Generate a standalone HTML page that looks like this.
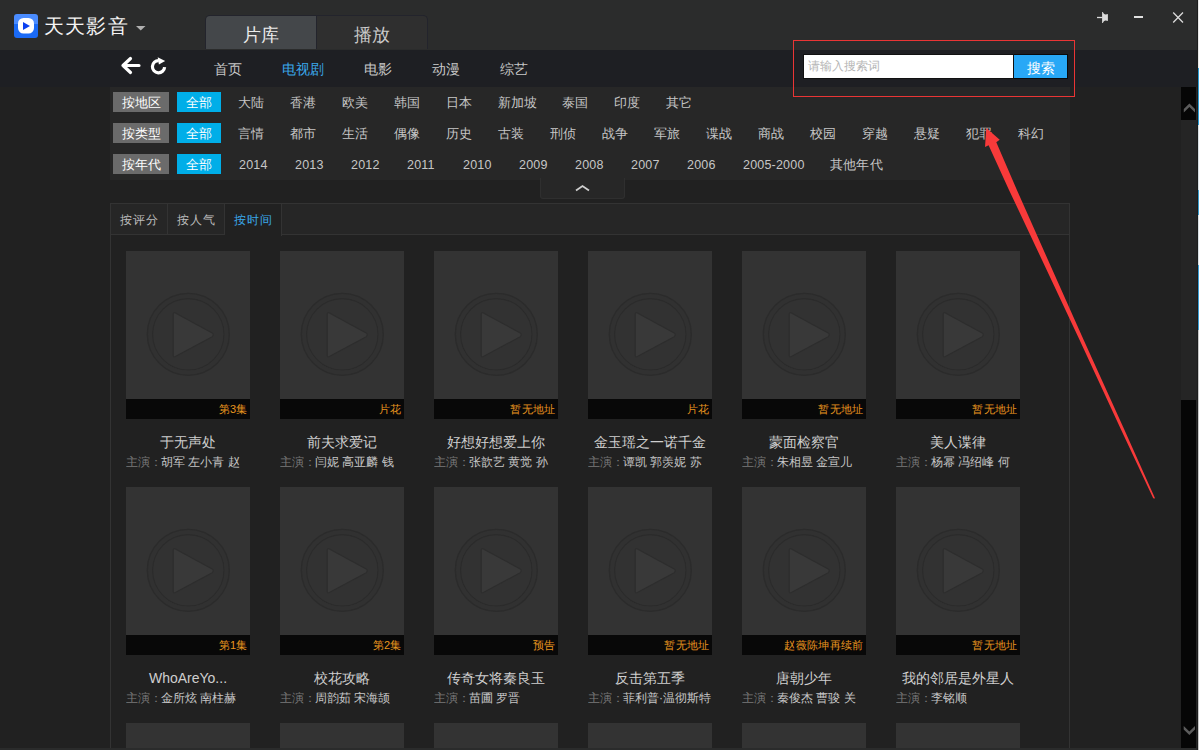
<!DOCTYPE html>
<html><head><meta charset="utf-8"><style>
*{margin:0;padding:0;box-sizing:border-box}
html,body{width:1199px;height:750px;overflow:hidden;background:#212121;font-family:"Liberation Sans",sans-serif;position:relative}
.abs{position:absolute}
#title{left:0;top:0;width:1197px;height:50px;background:#2b2c2c}
#nav{left:0;top:50px;width:1197px;height:37px;background:#1e1f23}
#logo{left:14px;top:14px;width:24px;height:24px;border-radius:3px;background:linear-gradient(#4a8cff 0,#4a8cff 10px,#1a6af5 10px,#1a6af5 100%)}
#apptitle{left:44px;top:13px;font-size:19.5px;color:#f4f4f4;letter-spacing:1.2px;white-space:nowrap}
#tabs{left:205px;top:15px;width:223px;height:34px;border:1px solid #23242c;border-bottom:none;border-radius:5px 5px 0 0;background:#23242c;overflow:hidden}
#tab1{left:0;top:0;width:110px;height:33px;background:#44474a;color:#ececec;font-size:17.5px;text-align:center;line-height:38px}
#tab2{left:111px;top:0;width:110px;height:33px;background:#2f2f2f;color:#cacaca;font-size:17.5px;text-align:center;line-height:38px}
.nv{position:absolute;top:61px;font-size:14px;color:#c8c8c8;white-space:nowrap}
#search-wrap{left:793px;top:40px;width:282px;height:57px;border:1px solid #ea3535}
#sinput{left:803px;top:54px;width:211px;height:25px;background:#fff;border:1px solid #111;font-size:12px;color:#b5b5b5;padding-left:4px;line-height:23px}
#sbtn{left:1014px;top:54px;width:54px;height:25px;background:#28a8f6;border:1px solid #0a0a0a;border-left:none;color:#fff;font-size:14px;text-align:center;line-height:27px}
#filter{left:110px;top:87px;width:960px;height:93px;background:#272727}
.lab,.all,.opt{position:absolute;height:20px;line-height:22px;white-space:nowrap;font-size:12.5px}
.lab{left:113px;width:56px;background:#6b6b6b;color:#fff;text-align:center}
.all{left:177px;width:44px;background:#00aee8;color:#fff;text-align:center}
.opt{color:#c6c6c6;letter-spacing:0.2px}
#collapse{left:540px;top:178px;width:85px;height:21px;background:#272727;border:1px solid #2f2f2f;border-top:none;border-radius:0 0 3px 3px}
#sortbox{left:110px;top:203px;width:960px;height:560px;border:1px solid #333}
#sorthead{left:111px;top:204px;width:958px;height:31px;background:#262626;border-bottom:1px solid #333}
.st{position:absolute;top:204px;height:31px;font-size:12px;letter-spacing:0.6px;text-indent:0.6px;color:#bdbdbd;text-align:center;line-height:33px;border-right:1px solid #333}
.card{position:absolute;width:124px}
.poster{position:relative;width:124px;height:168px;background:#333}
.pi{position:absolute;left:0;top:0}
.bar{position:absolute;left:0;bottom:0;width:124px;height:20px;background:#080808;color:#e8951f;font-size:11px;letter-spacing:0.35px;text-align:right;padding-right:2.3px;line-height:20px;white-space:nowrap}
.ttl{margin-top:13px;font-size:14px;color:#cfcfcf;text-align:center;white-space:nowrap;height:20px;line-height:21px}
.act{font-size:12px;color:#c6c6c6;white-space:nowrap;overflow:hidden;height:19px;line-height:21px}
.act span{color:#7a7a7a;margin-right:-1px}
#sb-track{left:1181px;top:87px;width:16px;height:663px;background:#252525}
#sb-up{left:1181px;top:87px;width:15px;height:33px;background:#060606}
#sb-thumb{left:1181px;top:400px;width:15px;height:348px;background:#060606}
#edge{left:1197px;top:0;width:1px;height:750px;background:#1c1d1d}
#edge2{left:1198px;top:0;width:1px;height:750px;background:linear-gradient(#e8e8e8 0,#e8e8e8 68px,#2c9fd8 68px,#2c9fd8 125px,#d8e0e4 125px,#d8e0e4 190px,#3a9fd0 190px,#3a9fd0 215px,#d8e0e4 215px,#d8e0e4 265px,#3aa0d8 265px,#3aa0d8 330px,#c8c8c8 330px,#c8c8c8 100%)}
#bottom{left:0;top:748px;width:1197px;height:2px;background:#2a2b2b}
</style></head><body>
<div id="title" class="abs"></div>
<div id="logo" class="abs"><svg width="24" height="24" viewBox="0 0 24 24"><rect x="4" y="4" width="16" height="15.5" rx="5.5" fill="#fff"/><path d="M9 8 L16 12 L9 16 Z" fill="#0b40f0"/></svg></div>
<div id="apptitle" class="abs">天天影音</div>
<svg class="abs" style="left:136px;top:25px" width="10" height="6"><path d="M0 1 H9.5 L4.75 5.5 Z" fill="#b0b0b0"/></svg>
<div id="tabs" class="abs"><div id="tab1" class="abs">片库</div><div id="tab2" class="abs">播放</div></div>
<svg class="abs" style="left:1096px;top:11px" width="14" height="14" viewBox="0 0 14 14"><path d="M1 6.5 H6.5" stroke="#dcdcdc" stroke-width="1.3"/><path d="M6.1 1 L6.8 1.1 Q7.8 3.2 9.2 3.6 L11.1 3.3 L11.9 3 L11.9 10 L11.1 9.7 L9.2 9.4 Q7.8 9.8 6.8 11.9 L6.1 12 Z" fill="#dcdcdc"/></svg>
<div class="abs" style="left:1134px;top:16px;width:9px;height:2px;background:#e0e0e0"></div>
<svg class="abs" style="left:1172px;top:11px" width="13" height="13" viewBox="0 0 13 13"><path d="M1.2 1.5 L11 11.5 M11 1.5 L1.2 11.5" stroke="#dadada" stroke-width="1.3"/></svg>
<div id="nav" class="abs"></div>
<svg class="abs" style="left:118px;top:54px" width="26" height="24" viewBox="0 0 26 24"><path d="M5 11.5 H21 M12.5 4.5 L5 11.5 L12.5 18.5" stroke="#fff" stroke-width="3.2" fill="none" stroke-linecap="round" stroke-linejoin="round"/></svg>
<svg class="abs" style="left:148px;top:55px" width="22" height="22" viewBox="0 0 22 22"><path d="M10.8 5.6 A6.1 6.1 0 1 0 16.6 12.1" stroke="#fff" stroke-width="3.2" fill="none"/><path d="M9.7 2.2 L17.2 5.9 L10.9 9.6 Z" fill="#fff"/></svg>
<div class="nv" style="left:214px">首页</div>
<div class="nv" style="left:282px;color:#3aa7ea">电视剧</div>
<div class="nv" style="left:364px">电影</div>
<div class="nv" style="left:432px">动漫</div>
<div class="nv" style="left:500px">综艺</div>
<div id="sinput" class="abs">请输入搜索词</div>
<div id="sbtn" class="abs">搜索</div>
<div id="filter" class="abs"></div>
<div class="lab" style="top:92px">按地区</div><div class="all" style="top:92px">全部</div><div class="opt" style="left:238px;top:92px">大陆</div><div class="opt" style="left:290px;top:92px">香港</div><div class="opt" style="left:342px;top:92px">欧美</div><div class="opt" style="left:394px;top:92px">韩国</div><div class="opt" style="left:446px;top:92px">日本</div><div class="opt" style="left:498px;top:92px">新加坡</div><div class="opt" style="left:562px;top:92px">泰国</div><div class="opt" style="left:614px;top:92px">印度</div><div class="opt" style="left:666px;top:92px">其它</div><div class="lab" style="top:123px">按类型</div><div class="all" style="top:123px">全部</div><div class="opt" style="left:238px;top:123px">言情</div><div class="opt" style="left:290px;top:123px">都市</div><div class="opt" style="left:342px;top:123px">生活</div><div class="opt" style="left:394px;top:123px">偶像</div><div class="opt" style="left:446px;top:123px">历史</div><div class="opt" style="left:498px;top:123px">古装</div><div class="opt" style="left:550px;top:123px">刑侦</div><div class="opt" style="left:602px;top:123px">战争</div><div class="opt" style="left:654px;top:123px">军旅</div><div class="opt" style="left:706px;top:123px">谍战</div><div class="opt" style="left:758px;top:123px">商战</div><div class="opt" style="left:810px;top:123px">校园</div><div class="opt" style="left:862px;top:123px">穿越</div><div class="opt" style="left:914px;top:123px">悬疑</div><div class="opt" style="left:966px;top:123px">犯罪</div><div class="opt" style="left:1018px;top:123px">科幻</div><div class="lab" style="top:154px">按年代</div><div class="all" style="top:154px">全部</div><div class="opt" style="left:239px;top:154px">2014</div><div class="opt" style="left:295px;top:154px">2013</div><div class="opt" style="left:351px;top:154px">2012</div><div class="opt" style="left:407px;top:154px">2011</div><div class="opt" style="left:463px;top:154px">2010</div><div class="opt" style="left:519px;top:154px">2009</div><div class="opt" style="left:575px;top:154px">2008</div><div class="opt" style="left:631px;top:154px">2007</div><div class="opt" style="left:687px;top:154px">2006</div><div class="opt" style="left:743px;top:154px">2005-2000</div><div class="opt" style="left:830px;top:154px">其他年代</div>
<div id="collapse" class="abs"><svg style="position:absolute;left:34px;top:6px" width="16" height="9"><path d="M1 6.5 L7.5 2 L14 6.5" stroke="#cfcfcf" stroke-width="1.8" fill="none"/></svg></div>
<div id="sortbox" class="abs"></div>
<div id="sorthead" class="abs"></div>
<div class="st" style="left:111px;width:57px">按评分</div>
<div class="st" style="left:168px;width:57px">按人气</div>
<div class="st" style="left:225px;width:57px;background:#212121;color:#3aa7ea;height:32px">按时间</div>
<div class="card" style="left:126px;top:251px"><div class="poster"><svg class="pi" width="124" height="148" viewBox="0 0 124 148"><circle cx="62.3" cy="83.3" r="35.8" fill="#323232" stroke="#2b2b2b" stroke-width="1.3"/><circle cx="62.3" cy="83.3" r="38.5" fill="none" stroke="#313131" stroke-width="4.4"/><circle cx="62.3" cy="83.3" r="41" fill="none" stroke="#2b2b2b" stroke-width="1.3"/><path d="M47.2 63.3 Q47.2 60.8 49.4 62 L86.2 81.9 Q88.2 83.8 86.2 85.7 L49.4 105.6 Q47.2 106.8 47.2 104.3 Z" fill="#393939" stroke="#2d2d2d" stroke-width="1.1"/></svg><div class="bar">第3集</div></div><div class="ttl">于无声处</div><div class="act"><span>主演：</span>胡军 左小青 赵</div></div><div class="card" style="left:280px;top:251px"><div class="poster"><svg class="pi" width="124" height="148" viewBox="0 0 124 148"><circle cx="62.3" cy="83.3" r="35.8" fill="#323232" stroke="#2b2b2b" stroke-width="1.3"/><circle cx="62.3" cy="83.3" r="38.5" fill="none" stroke="#313131" stroke-width="4.4"/><circle cx="62.3" cy="83.3" r="41" fill="none" stroke="#2b2b2b" stroke-width="1.3"/><path d="M47.2 63.3 Q47.2 60.8 49.4 62 L86.2 81.9 Q88.2 83.8 86.2 85.7 L49.4 105.6 Q47.2 106.8 47.2 104.3 Z" fill="#393939" stroke="#2d2d2d" stroke-width="1.1"/></svg><div class="bar">片花</div></div><div class="ttl">前夫求爱记</div><div class="act"><span>主演：</span>闫妮 高亚麟 钱</div></div><div class="card" style="left:434px;top:251px"><div class="poster"><svg class="pi" width="124" height="148" viewBox="0 0 124 148"><circle cx="62.3" cy="83.3" r="35.8" fill="#323232" stroke="#2b2b2b" stroke-width="1.3"/><circle cx="62.3" cy="83.3" r="38.5" fill="none" stroke="#313131" stroke-width="4.4"/><circle cx="62.3" cy="83.3" r="41" fill="none" stroke="#2b2b2b" stroke-width="1.3"/><path d="M47.2 63.3 Q47.2 60.8 49.4 62 L86.2 81.9 Q88.2 83.8 86.2 85.7 L49.4 105.6 Q47.2 106.8 47.2 104.3 Z" fill="#393939" stroke="#2d2d2d" stroke-width="1.1"/></svg><div class="bar">暂无地址</div></div><div class="ttl">好想好想爱上你</div><div class="act"><span>主演：</span>张歆艺 黄觉 孙</div></div><div class="card" style="left:588px;top:251px"><div class="poster"><svg class="pi" width="124" height="148" viewBox="0 0 124 148"><circle cx="62.3" cy="83.3" r="35.8" fill="#323232" stroke="#2b2b2b" stroke-width="1.3"/><circle cx="62.3" cy="83.3" r="38.5" fill="none" stroke="#313131" stroke-width="4.4"/><circle cx="62.3" cy="83.3" r="41" fill="none" stroke="#2b2b2b" stroke-width="1.3"/><path d="M47.2 63.3 Q47.2 60.8 49.4 62 L86.2 81.9 Q88.2 83.8 86.2 85.7 L49.4 105.6 Q47.2 106.8 47.2 104.3 Z" fill="#393939" stroke="#2d2d2d" stroke-width="1.1"/></svg><div class="bar">片花</div></div><div class="ttl">金玉瑶之一诺千金</div><div class="act"><span>主演：</span>谭凯 郭羡妮 苏</div></div><div class="card" style="left:742px;top:251px"><div class="poster"><svg class="pi" width="124" height="148" viewBox="0 0 124 148"><circle cx="62.3" cy="83.3" r="35.8" fill="#323232" stroke="#2b2b2b" stroke-width="1.3"/><circle cx="62.3" cy="83.3" r="38.5" fill="none" stroke="#313131" stroke-width="4.4"/><circle cx="62.3" cy="83.3" r="41" fill="none" stroke="#2b2b2b" stroke-width="1.3"/><path d="M47.2 63.3 Q47.2 60.8 49.4 62 L86.2 81.9 Q88.2 83.8 86.2 85.7 L49.4 105.6 Q47.2 106.8 47.2 104.3 Z" fill="#393939" stroke="#2d2d2d" stroke-width="1.1"/></svg><div class="bar">暂无地址</div></div><div class="ttl">蒙面检察官</div><div class="act"><span>主演：</span>朱相昱 金宣儿</div></div><div class="card" style="left:896px;top:251px"><div class="poster"><svg class="pi" width="124" height="148" viewBox="0 0 124 148"><circle cx="62.3" cy="83.3" r="35.8" fill="#323232" stroke="#2b2b2b" stroke-width="1.3"/><circle cx="62.3" cy="83.3" r="38.5" fill="none" stroke="#313131" stroke-width="4.4"/><circle cx="62.3" cy="83.3" r="41" fill="none" stroke="#2b2b2b" stroke-width="1.3"/><path d="M47.2 63.3 Q47.2 60.8 49.4 62 L86.2 81.9 Q88.2 83.8 86.2 85.7 L49.4 105.6 Q47.2 106.8 47.2 104.3 Z" fill="#393939" stroke="#2d2d2d" stroke-width="1.1"/></svg><div class="bar">暂无地址</div></div><div class="ttl">美人谍律</div><div class="act"><span>主演：</span>杨幂 冯绍峰 何</div></div><div class="card" style="left:126px;top:487px"><div class="poster"><svg class="pi" width="124" height="148" viewBox="0 0 124 148"><circle cx="62.3" cy="83.3" r="35.8" fill="#323232" stroke="#2b2b2b" stroke-width="1.3"/><circle cx="62.3" cy="83.3" r="38.5" fill="none" stroke="#313131" stroke-width="4.4"/><circle cx="62.3" cy="83.3" r="41" fill="none" stroke="#2b2b2b" stroke-width="1.3"/><path d="M47.2 63.3 Q47.2 60.8 49.4 62 L86.2 81.9 Q88.2 83.8 86.2 85.7 L49.4 105.6 Q47.2 106.8 47.2 104.3 Z" fill="#393939" stroke="#2d2d2d" stroke-width="1.1"/></svg><div class="bar">第1集</div></div><div class="ttl">WhoAreYo...</div><div class="act"><span>主演：</span>金所炫 南柱赫</div></div><div class="card" style="left:280px;top:487px"><div class="poster"><svg class="pi" width="124" height="148" viewBox="0 0 124 148"><circle cx="62.3" cy="83.3" r="35.8" fill="#323232" stroke="#2b2b2b" stroke-width="1.3"/><circle cx="62.3" cy="83.3" r="38.5" fill="none" stroke="#313131" stroke-width="4.4"/><circle cx="62.3" cy="83.3" r="41" fill="none" stroke="#2b2b2b" stroke-width="1.3"/><path d="M47.2 63.3 Q47.2 60.8 49.4 62 L86.2 81.9 Q88.2 83.8 86.2 85.7 L49.4 105.6 Q47.2 106.8 47.2 104.3 Z" fill="#393939" stroke="#2d2d2d" stroke-width="1.1"/></svg><div class="bar">第2集</div></div><div class="ttl">校花攻略</div><div class="act"><span>主演：</span>周韵茹 宋海颉</div></div><div class="card" style="left:434px;top:487px"><div class="poster"><svg class="pi" width="124" height="148" viewBox="0 0 124 148"><circle cx="62.3" cy="83.3" r="35.8" fill="#323232" stroke="#2b2b2b" stroke-width="1.3"/><circle cx="62.3" cy="83.3" r="38.5" fill="none" stroke="#313131" stroke-width="4.4"/><circle cx="62.3" cy="83.3" r="41" fill="none" stroke="#2b2b2b" stroke-width="1.3"/><path d="M47.2 63.3 Q47.2 60.8 49.4 62 L86.2 81.9 Q88.2 83.8 86.2 85.7 L49.4 105.6 Q47.2 106.8 47.2 104.3 Z" fill="#393939" stroke="#2d2d2d" stroke-width="1.1"/></svg><div class="bar">预告</div></div><div class="ttl">传奇女将秦良玉</div><div class="act"><span>主演：</span>苗圃 罗晋</div></div><div class="card" style="left:588px;top:487px"><div class="poster"><svg class="pi" width="124" height="148" viewBox="0 0 124 148"><circle cx="62.3" cy="83.3" r="35.8" fill="#323232" stroke="#2b2b2b" stroke-width="1.3"/><circle cx="62.3" cy="83.3" r="38.5" fill="none" stroke="#313131" stroke-width="4.4"/><circle cx="62.3" cy="83.3" r="41" fill="none" stroke="#2b2b2b" stroke-width="1.3"/><path d="M47.2 63.3 Q47.2 60.8 49.4 62 L86.2 81.9 Q88.2 83.8 86.2 85.7 L49.4 105.6 Q47.2 106.8 47.2 104.3 Z" fill="#393939" stroke="#2d2d2d" stroke-width="1.1"/></svg><div class="bar">暂无地址</div></div><div class="ttl">反击第五季</div><div class="act"><span>主演：</span>菲利普·温彻斯特</div></div><div class="card" style="left:742px;top:487px"><div class="poster"><svg class="pi" width="124" height="148" viewBox="0 0 124 148"><circle cx="62.3" cy="83.3" r="35.8" fill="#323232" stroke="#2b2b2b" stroke-width="1.3"/><circle cx="62.3" cy="83.3" r="38.5" fill="none" stroke="#313131" stroke-width="4.4"/><circle cx="62.3" cy="83.3" r="41" fill="none" stroke="#2b2b2b" stroke-width="1.3"/><path d="M47.2 63.3 Q47.2 60.8 49.4 62 L86.2 81.9 Q88.2 83.8 86.2 85.7 L49.4 105.6 Q47.2 106.8 47.2 104.3 Z" fill="#393939" stroke="#2d2d2d" stroke-width="1.1"/></svg><div class="bar">赵薇陈坤再续前</div></div><div class="ttl">唐朝少年</div><div class="act"><span>主演：</span>秦俊杰 曹骏 关</div></div><div class="card" style="left:896px;top:487px"><div class="poster"><svg class="pi" width="124" height="148" viewBox="0 0 124 148"><circle cx="62.3" cy="83.3" r="35.8" fill="#323232" stroke="#2b2b2b" stroke-width="1.3"/><circle cx="62.3" cy="83.3" r="38.5" fill="none" stroke="#313131" stroke-width="4.4"/><circle cx="62.3" cy="83.3" r="41" fill="none" stroke="#2b2b2b" stroke-width="1.3"/><path d="M47.2 63.3 Q47.2 60.8 49.4 62 L86.2 81.9 Q88.2 83.8 86.2 85.7 L49.4 105.6 Q47.2 106.8 47.2 104.3 Z" fill="#393939" stroke="#2d2d2d" stroke-width="1.1"/></svg><div class="bar">暂无地址</div></div><div class="ttl">我的邻居是外星人</div><div class="act"><span>主演：</span>李铭顺</div></div><div class="card" style="left:126px;top:723px"><div class="poster"></div></div><div class="card" style="left:280px;top:723px"><div class="poster"></div></div><div class="card" style="left:434px;top:723px"><div class="poster"></div></div><div class="card" style="left:588px;top:723px"><div class="poster"></div></div><div class="card" style="left:742px;top:723px"><div class="poster"></div></div><div class="card" style="left:896px;top:723px"><div class="poster"></div></div>
<div id="search-wrap" class="abs"></div>
<div id="sb-track" class="abs"></div>
<div id="sb-up" class="abs"><svg style="position:absolute;left:0;top:0" width="15" height="33"><path d="M2.8 22 L8.4 16.5 L14 22 L14 25.6 L8.4 20.1 L2.8 25.6 Z" fill="#5c5c5c"/></svg></div>
<div id="sb-thumb" class="abs"><svg style="position:absolute;left:0;top:0" width="15" height="348"><path d="M2.7 326 L8.35 331.4 L14 326 L14 329.6 L8.35 335 L2.7 329.6 Z" fill="#5c5c5c"/></svg></div>
<div id="bottom" class="abs"></div>
<div id="edge" class="abs"></div>
<div id="edge2" class="abs"></div>
<svg class="abs" style="left:0;top:0" width="1199" height="750"><path d="M986.3 128.0 L999.7 139.7 L996.3 142.3 L1016.9 190.0 L1048.0 260.0 L1083.7 340.0 L1124.5 430.0 L1154.9 498.0 L1154.2 498.8 L1153.1 498.0 L1121.2 430.0 L1079.6 340.0 L1042.0 260.0 L1009.0 190.0 L988.6 145.3 L985.0 147.0 Z" fill="#f83a3a"/></svg>
</body></html>
